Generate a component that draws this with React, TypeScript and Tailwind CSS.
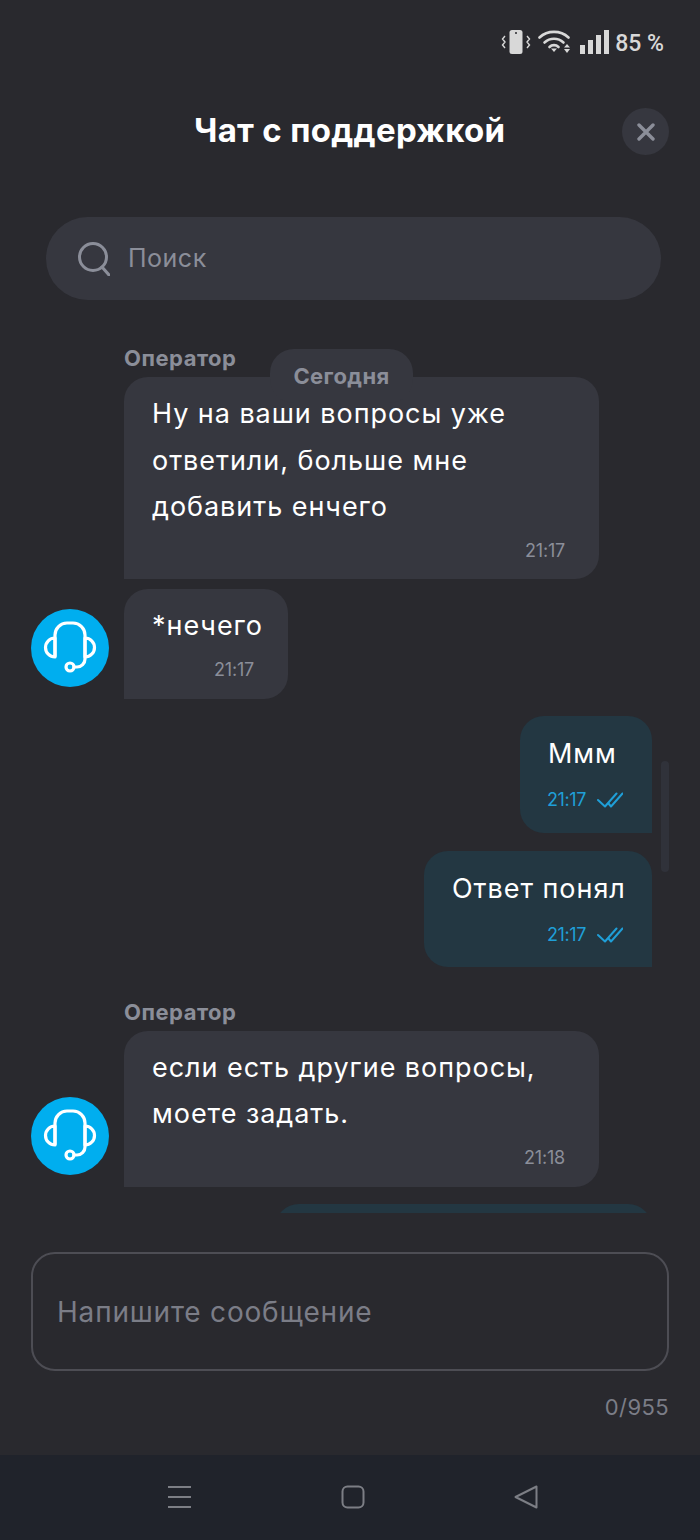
import React from "react";

const font = { fontFamily: "Inter, 'Noto Sans', sans-serif" };

function Headset() {
  return (
    <div className="w-[78px] h-[78px] rounded-full bg-[#00aeef] shrink-0">
      <svg width="78" height="78" viewBox="0 0 78 78" fill="none" stroke="white" strokeWidth="3.2" strokeLinecap="round" strokeLinejoin="round">
        <path d="M24 47V26a12 12 0 0 1 12-12h6a12 12 0 0 1 12 12v24a8 8 0 0 1-8 8h-3" />
        <path d="M24 29a9.5 9.5 0 0 0 0 19z" />
        <path d="M54 29a9.5 9.5 0 0 1 0 19z" />
        <circle cx="39" cy="58" r="4" />
      </svg>
    </div>
  );
}

function Checks() {
  return (
    <svg width="26" height="16" viewBox="0 0 26 16" fill="none" className="shrink-0" stroke="#1f9fd8" strokeWidth="2" strokeLinecap="round" strokeLinejoin="round">
      <path d="M1 8l7 6.5L19.5 1.5" />
      <path d="M11.5 11.5l2.5 3L25.5 1.5" />
    </svg>
  );
}

function Left({ children, time, pb, w, avatar }: { children: React.ReactNode; time: string; pb: string; w: string; avatar?: boolean }) {
  return (
    <div className="flex items-end shrink-0">
      <div className="w-[124px] shrink-0 pl-[31px] pb-[12px]">{avatar ? <Headset /> : null}</div>
      <div className={`${w} bg-[#36373f] rounded-t-[24px] rounded-br-[24px] pl-[28px] pr-[34px] pt-[14px] ${pb}`}>
        <div className="text-[27px] leading-[46.5px] text-white tracking-[0.95px] whitespace-nowrap">{children}</div>
        <div className="text-right text-[18px] leading-[40px] tracking-[-0.2px] text-[#8b8e99]">{time}</div>
      </div>
    </div>
  );
}

function Right({ children, w, pb }: { children: React.ReactNode; w: string; pb: string }) {
  return (
    <div className="flex justify-end pr-[48px] shrink-0">
      <div className={`${w} bg-[#233742] rounded-t-[24px] rounded-bl-[24px] pl-[20px] pr-[28px] pt-[15px] ${pb}`}>
        <div className="text-[27px] leading-[46px] pl-[8px] text-white whitespace-nowrap tracking-[0.95px]">{children}</div>
        <div className="flex justify-end items-center gap-[11px] h-[46px] pr-[1px] text-[18px] tracking-[-0.4px] text-[#1f9fd8]">
          <span>21:17</span>
          <Checks />
        </div>
      </div>
    </div>
  );
}

function Label() {
  return <div className="pl-[124px] h-[34px] shrink-0 text-[22px] leading-[30px] tracking-[0.5px] font-bold text-[#8b8e99]">Оператор</div>;
}

export default function App() {
  return (
    <div style={font} className="relative w-[700px] h-[1540px] bg-[#29292e] flex flex-col overflow-hidden">
      {/* status bar */}
      <div className="h-[85px] shrink-0 flex items-start justify-end pr-[36px] pt-[30px] text-[#d8d8d8]">
        <svg width="32" height="24" viewBox="0 0 32 24" fill="none" className="mr-[6px]">
          <rect x="9.5" y="0" width="13" height="24" rx="2.5" fill="#d8d8d8" />
          <circle cx="16" cy="3" r="1" fill="#29292e" />
          <path d="M5 6L2.5 9 5 12 2.5 15 5 18M27 6l2.5 3L27 12l2.5 3L27 18" stroke="#d8d8d8" strokeWidth="1.4" />
        </svg>
        <svg width="34" height="24" viewBox="0 0 34 24" fill="none" stroke="#d8d8d8" strokeWidth="2.6" strokeLinecap="round" className="mr-[8px]">
          <path d="M1.5 7.5C9.5 0 22.5 0 30.5 7.5" />
          <path d="M6.5 12.5C12 7.5 20 7.5 25.5 12.5" />
          <path d="M11.5 17C14 14.5 18 14.5 20.5 17" />
          <path d="M13 18.5l3 3.5 3-3.5z" fill="#d8d8d8" stroke="none" />
          <path d="M26 17.5l3-3.5 3 3.5zM26 19l3 4 3-4z" fill="#d8d8d8" stroke="none" />
        </svg>
        <div className="flex items-end gap-[3px] h-[24px] mr-[6px]">
          <div className="w-[5px] h-[9px] bg-[#d8d8d8]" />
          <div className="w-[5px] h-[14px] bg-[#d8d8d8]" />
          <div className="w-[5px] h-[19px] bg-[#d8d8d8]" />
          <div className="w-[5px] h-[24px] bg-[#d8d8d8]" />
        </div>
        <span className="text-[23px] leading-[26px] pt-[1px] font-medium" style={{ fontFamily: "Roboto, sans-serif" }}>85 %</span>
      </div>

      {/* header */}
      <div className="h-[93px] shrink-0 flex items-center justify-between pl-[194px] pr-[31px]">
        <div className="text-[33px] font-bold tracking-[0.3px] text-white whitespace-nowrap -mt-[2px]">Чат с поддержкой</div>
        <div className="w-[47px] h-[47px] rounded-full bg-[#36373f] flex items-center justify-center">
          <svg width="18" height="18" viewBox="0 0 18 18" stroke="#8b8e99" strokeWidth="3.4" strokeLinecap="round">
            <path d="M2 2l14 14M16 2L2 16" />
          </svg>
        </div>
      </div>

      {/* search */}
      <div className="pl-[46px] pr-[39px] pt-[39px] shrink-0">
        <div className="h-[83px] rounded-[42px] bg-[#36373f] flex items-center pl-[32px] gap-[18px]">
          <svg width="32" height="34" viewBox="0 0 32 34" fill="none" stroke="#8b8e99" strokeWidth="3" strokeLinecap="round">
            <circle cx="15" cy="15" r="13.5" />
            <path d="M24 25l7 8" />
          </svg>
          <span className="text-[25px] text-[#8b8e99] tracking-[0.5px]">Поиск</span>
        </div>
      </div>

      {/* chat */}
      <div className="h-[913px] shrink-0 overflow-hidden pt-[43px] flex flex-col">
        <Label />
        <Left w="w-[475px]" pb="pb-[8.5px]" time="21:17">
          Ну на ваши вопросы уже
          <br />
          ответили, больше мне
          <br />
          добавить енчего
        </Left>
        <div className="h-[10px] shrink-0" />
        <Left w="w-[164px]" pb="pb-[9px]" time="21:17" avatar>
          *нечего
        </Left>
        <div className="h-[17px] shrink-0" />
        <Right w="w-[132px]" pb="pb-[10px]">Ммм</Right>
        <div className="h-[18px] shrink-0" />
        <Right w="w-[228px]" pb="pb-[9px]">Ответ понял</Right>
        <div className="h-[30px] shrink-0" />
        <Label />
        <Left w="w-[475px]" pb="pb-[9px]" time="21:18" avatar>
          если есть другие вопросы,
          <br />
          моете задать.
        </Left>
        <div className="h-[17px] shrink-0" />
        <div className="flex justify-end pr-[48px] shrink-0">
          <div className="w-[377px] h-[60px] shrink-0 bg-[#233742] rounded-t-[24px]" />
        </div>
      </div>

      {/* input */}
      <div className="pt-[39px] px-[31px] shrink-0">
        <div className="h-[119px] rounded-[24px] border-2 border-[#4d4d54] flex items-center pl-[24px] text-[28px] text-[#7b7d87] tracking-[0.8px]">
          Напишите сообщение
        </div>
        <div className="text-right text-[22px] leading-[30px] mt-[21px] tracking-[0.4px] text-[#7b7d87]">0/955</div>
      </div>

      <div className="flex-1" />

      {/* nav bar */}
      <div className="h-[85px] shrink-0 bg-[#20232b] flex items-center">
        <div className="w-full flex justify-between pl-[167px] pr-[162px] -mt-[2px]">
          <svg width="25" height="24" viewBox="0 0 25 24" stroke="#7c7e85" strokeWidth="2">
            <path d="M1 2h23M1 12h23M1 22h23" />
          </svg>
          <svg width="24" height="24" viewBox="0 0 24 24" fill="none" stroke="#7c7e85" strokeWidth="2">
            <rect x="1.5" y="1.5" width="21" height="21" rx="5" />
          </svg>
          <svg width="24" height="24" viewBox="0 0 24 24" fill="none" stroke="#7c7e85" strokeWidth="2" strokeLinejoin="round">
            <path d="M22.5 1.5v21L1.5 12z" />
          </svg>
        </div>
      </div>

      {/* date pill */}
      <div className="absolute left-[270px] top-[349px] w-[143px] h-[54px] rounded-[24px] bg-[#36373f] text-center text-[22px] leading-[54px] tracking-[0.4px] font-bold text-[#8b8e99]">
        Сегодня
      </div>

      {/* scrollbar */}
      <div className="absolute left-[661px] top-[761px] w-[8px] h-[111px] rounded-full bg-[#30323a]" />
    </div>
  );
}
